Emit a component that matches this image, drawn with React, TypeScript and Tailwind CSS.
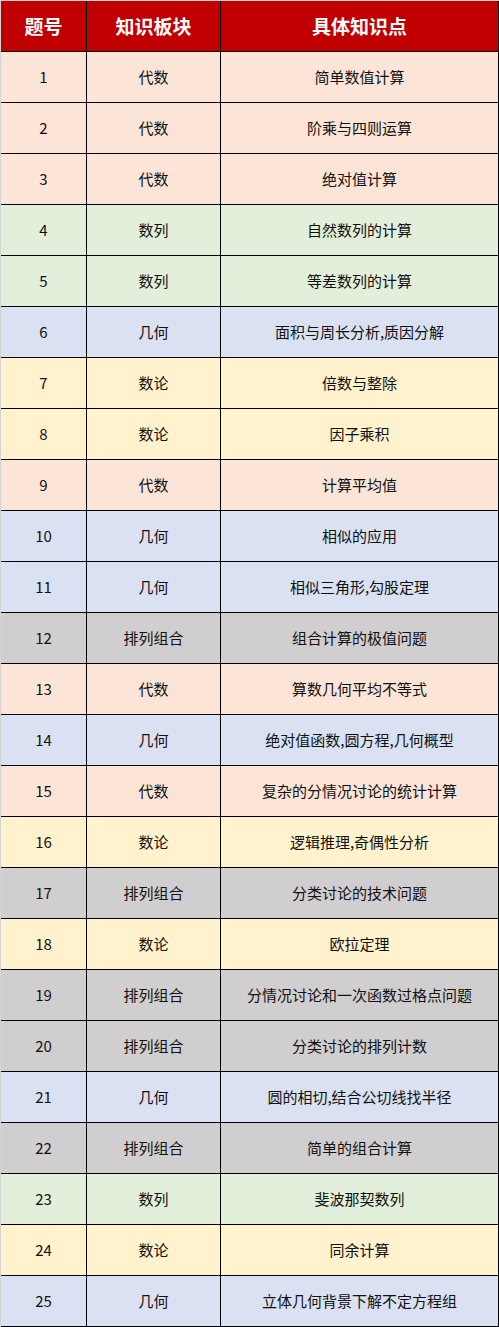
const colors = {
  peach: 'bg-[#fce4d6]',
  green: 'bg-[#e2efda]',
  blue: 'bg-[#d9e1f2]',
  yellow: 'bg-[#fff2cc]',
  gray: 'bg-[#d0cece]',
}

type Tone = keyof typeof colors

// 板块 -> 底色
const toneOf: Record<string, Tone> = {
  代数: 'peach',
  数列: 'green',
  几何: 'blue',
  数论: 'yellow',
  排列组合: 'gray',
}

const rows: [string, string][] = [
  ['代数', '简单数值计算'],
  ['代数', '阶乘与四则运算'],
  ['代数', '绝对值计算'],
  ['数列', '自然数列的计算'],
  ['数列', '等差数列的计算'],
  ['几何', '面积与周长分析,质因分解'],
  ['数论', '倍数与整除'],
  ['数论', '因子乘积'],
  ['代数', '计算平均值'],
  ['几何', '相似的应用'],
  ['几何', '相似三角形,勾股定理'],
  ['排列组合', '组合计算的极值问题'],
  ['代数', '算数几何平均不等式'],
  ['几何', '绝对值函数,圆方程,几何概型'],
  ['代数', '复杂的分情况讨论的统计计算'],
  ['数论', '逻辑推理,奇偶性分析'],
  ['排列组合', '分类讨论的技术问题'],
  ['数论', '欧拉定理'],
  ['排列组合', '分情况讨论和一次函数过格点问题'],
  ['排列组合', '分类讨论的排列计数'],
  ['几何', '圆的相切,结合公切线找半径'],
  ['排列组合', '简单的组合计算'],
  ['数列', '斐波那契数列'],
  ['数论', '同余计算'],
  ['几何', '立体几何背景下解不定方程组'],
]

const cell = 'flex items-center justify-center border-r border-b border-black leading-none'

export default function App() {
  return (
    <div
      className="w-[499px] bg-white border-l border-t border-[#d4d4d4]"
      style={{ fontFamily: '"Noto Sans CJK SC", "Noto Sans", sans-serif' }}
    >
      <div className="grid grid-cols-[86px_134px_278px] h-[51px] bg-[#c00000] text-white text-[19px] font-bold">
        <div className={`${cell} pb-[2px]`}>题号</div>
        <div className={`${cell} pb-[2px]`}>知识板块</div>
        <div className={`${cell} pb-[2px]`}>具体知识点</div>
      </div>
      {rows.map(([block, topic], i) => (
        <div
          key={i}
          className={`grid grid-cols-[86px_134px_278px] h-[51px] text-[15px] text-[#111] ${colors[toneOf[block]]}`}
        >
          <div className={`${cell} pb-px`}>{i + 1}</div>
          <div className={`${cell} pb-px`}>{block}</div>
          <div className={`${cell} pb-px`}>{topic}</div>
        </div>
      ))}
    </div>
  )
}
